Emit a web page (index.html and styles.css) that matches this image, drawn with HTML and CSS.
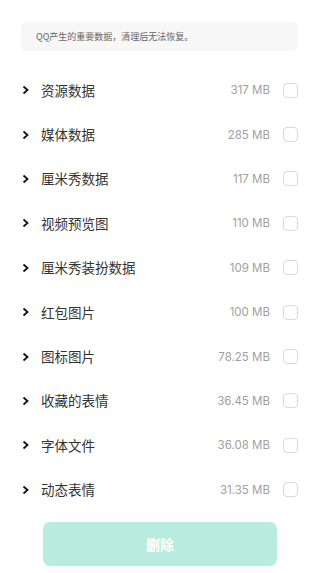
FILE: index.html
```html
<!DOCTYPE html>
<html lang="zh">
<head>
<meta charset="utf-8">
<link rel="stylesheet" href="styles.css">
</head>
<body>
<div class="page">
  <div class="notice">QQ产生的重要数据，清理后无法恢复。</div>
  <ul class="list">
    <li class="row"><svg class="chev" viewBox="0 0 8 10"><path d="M1.5 1.5 L5.5 5 L1.5 8.5"/></svg><span class="name">资源数据</span><span class="size">317 MB</span><span class="box"></span></li>
    <li class="row"><svg class="chev" viewBox="0 0 8 10"><path d="M1.5 1.5 L5.5 5 L1.5 8.5"/></svg><span class="name">媒体数据</span><span class="size">285 MB</span><span class="box"></span></li>
    <li class="row"><svg class="chev" viewBox="0 0 8 10"><path d="M1.5 1.5 L5.5 5 L1.5 8.5"/></svg><span class="name">厘米秀数据</span><span class="size">117 MB</span><span class="box"></span></li>
    <li class="row"><svg class="chev" viewBox="0 0 8 10"><path d="M1.5 1.5 L5.5 5 L1.5 8.5"/></svg><span class="name">视频预览图</span><span class="size">110 MB</span><span class="box"></span></li>
    <li class="row"><svg class="chev" viewBox="0 0 8 10"><path d="M1.5 1.5 L5.5 5 L1.5 8.5"/></svg><span class="name">厘米秀装扮数据</span><span class="size">109 MB</span><span class="box"></span></li>
    <li class="row"><svg class="chev" viewBox="0 0 8 10"><path d="M1.5 1.5 L5.5 5 L1.5 8.5"/></svg><span class="name">红包图片</span><span class="size">100 MB</span><span class="box"></span></li>
    <li class="row"><svg class="chev" viewBox="0 0 8 10"><path d="M1.5 1.5 L5.5 5 L1.5 8.5"/></svg><span class="name">图标图片</span><span class="size">78.25 MB</span><span class="box"></span></li>
    <li class="row"><svg class="chev" viewBox="0 0 8 10"><path d="M1.5 1.5 L5.5 5 L1.5 8.5"/></svg><span class="name">收藏的表情</span><span class="size">36.45 MB</span><span class="box"></span></li>
    <li class="row"><svg class="chev" viewBox="0 0 8 10"><path d="M1.5 1.5 L5.5 5 L1.5 8.5"/></svg><span class="name">字体文件</span><span class="size">36.08 MB</span><span class="box"></span></li>
    <li class="row"><svg class="chev" viewBox="0 0 8 10"><path d="M1.5 1.5 L5.5 5 L1.5 8.5"/></svg><span class="name">动态表情</span><span class="size">31.35 MB</span><span class="box"></span></li>
  </ul>
  <div class="actions"><button class="delete">删除</button></div>
</div>
</body>
</html>
```
FILE: styles.css
```css
html, body {
  margin: 0;
  padding: 0;
  background: #ffffff;
}
body {
  font-family: "Noto Sans CJK SC", "Noto Sans", sans-serif;
  color: #333333;
}
.page {
  padding: 22px 22px 0 21px;
}
.notice {
  background: #f7f7f7;
  border-radius: 5px;
  height: 29px;
  line-height: 29px;
  font-size: 9px;
  color: #666666;
  padding-left: 15px;
}
.list {
  list-style: none;
  margin: 17px 0 0 0;
  padding: 0;
}
.row {
  display: flex;
  align-items: center;
  height: 44.4px;
}
.chev {
  width: 8px;
  height: 10px;
  margin-left: 1px;
  fill: none;
  stroke: #111111;
  stroke-width: 1.8;
}
.name {
  margin-left: 11px;
  font-size: 13.5px;
  line-height: 16px;
  margin-bottom: 1px;
  color: #333333;
  flex: 1;
}
.size {
  font-family: "Inter", "Noto Sans", sans-serif;
  font-size: 11.5px;
  color: #a0a0a0;
  margin-right: 13px;
}
.box {
  width: 13px;
  height: 13px;
  border: 1.2px solid #d8d8d8;
  border-radius: 4px;
}
.actions {
  display: flex;
  justify-content: center;
  margin-top: 10px;
  padding-left: 1px;
}
.delete {
  width: 234px;
  height: 44px;
  border: none;
  border-radius: 7px;
  background: #b7ecde;
  color: #ffffff;
  font-family: "Noto Sans CJK SC", sans-serif;
  font-size: 14px;
  font-weight: bold;
}
```
